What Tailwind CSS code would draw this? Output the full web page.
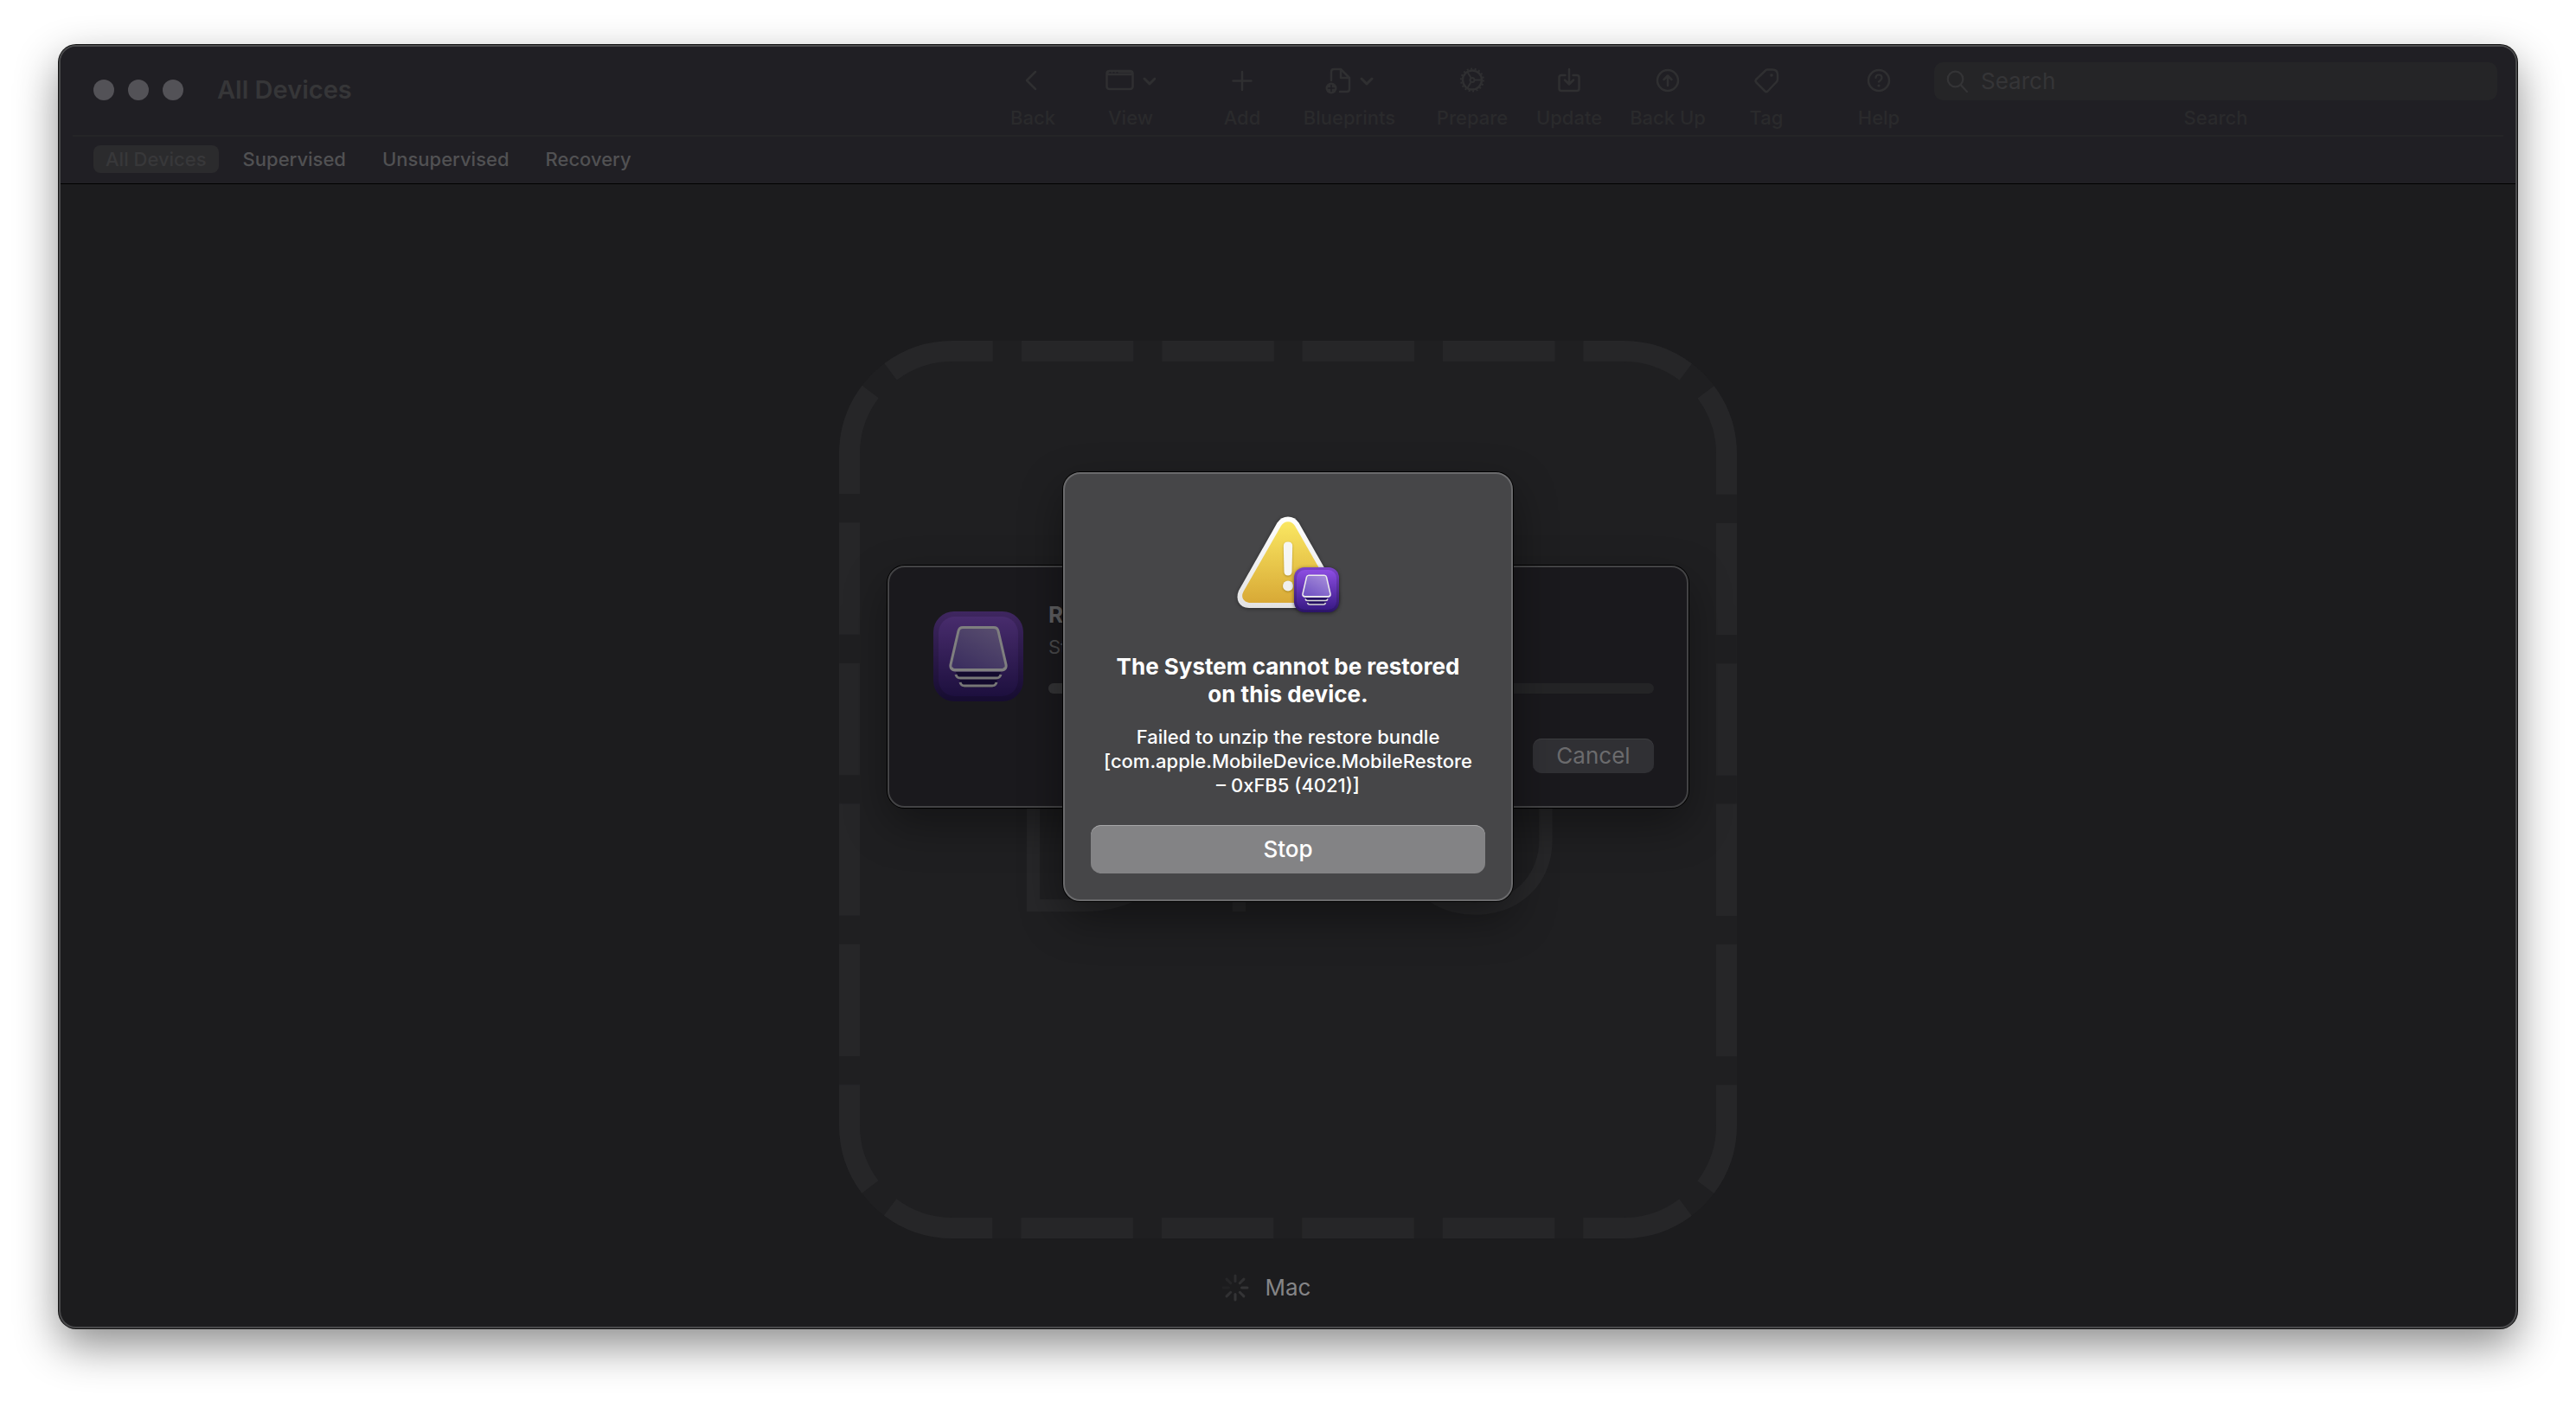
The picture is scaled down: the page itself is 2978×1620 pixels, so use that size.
<!DOCTYPE html>
<html lang="en">
<head>
<meta charset="utf-8">
<title>All Devices</title>
<script src="https://cdn.jsdelivr.net/npm/@tailwindcss/browser@4"></script>
</head>
<body class="flex min-h-screen bg-white px-[68px] pt-[52px] pb-[84px] font-[Inter,'Liberation_Sans',sans-serif] text-[22px] leading-7">

<svg class="absolute size-0" aria-hidden="true">
  <defs>
    <linearGradient id="tile" x1="0" y1="0" x2="0" y2="1"><stop offset="0" stop-color="#7c43c8"/><stop offset="1" stop-color="#2b1468"/></linearGradient>
    <linearGradient id="face" x1="0" y1="0" x2="0" y2="1"><stop offset="0" stop-color="#8d4de2"/><stop offset="1" stop-color="#391a86"/></linearGradient>
    <linearGradient id="glass" x1="1" y1="0" x2="0.3" y2="1"><stop offset="0" stop-color="#ab92dc"/><stop offset="1" stop-color="#7355c4"/></linearGradient>
    <linearGradient id="warn" x1="0" y1="0" x2="0" y2="1"><stop offset="0" stop-color="#fae762"/><stop offset="1" stop-color="#d8a936"/></linearGradient>
    <linearGradient id="rim" x1="0" y1="0" x2="0" y2="1"><stop offset="0" stop-color="#ffffff"/><stop offset="1" stop-color="#e2e2e2"/></linearGradient>
    <symbol id="configurator" viewBox="0 0 104 104">
      <rect width="104" height="104" rx="24" fill="url(#tile)"/>
      <rect x="6" y="6" width="92" height="92" rx="19" fill="url(#face)"/>
      <path d="M26 70h52l-8 18H34z" fill="#1c0b55" opacity=".8"/>
      <path d="M34 18.500h36q4 0 5 4l9 39q1 6-5 6H25q-6 0-5-6l9-39q1-4 5-4z" fill="url(#glass)" stroke="#ebebeb" stroke-width="3"/>
      <path d="M21 65q1 3 4 3h54q3 0 4-3" fill="none" stroke="#ebebeb" stroke-width="3"/>
      <path d="M26 73q1 4 5 4h42q4 0 5-4M31 82q1 4 5 4h32q4 0 5-4" fill="none" stroke="#dcdcdc" stroke-width="3"/>
    </symbol>
  </defs>
</svg>

<div class="flex flex-1 flex-col overflow-hidden rounded-[20px] border-2 border-[#4a4a4c] bg-[#1c1c1e] shadow-[0_0_0_1px_#111111,0_20px_50px_rgba(0,0,0,0.45)]">

  <header class="border-b border-black bg-[#201f24]">
    <div class="flex h-[102px] items-start pr-[21px] pl-[38px] text-[#2a2a2c]">
      <div class="mt-[38px] flex gap-4">
        <button type="button" aria-label="Close" class="size-6 rounded-full bg-[#535257]"></button>
        <button type="button" aria-label="Minimize" class="size-6 rounded-full bg-[#535257]"></button>
        <button type="button" aria-label="Zoom" class="size-6 rounded-full bg-[#535257]"></button>
      </div>
      <h1 class="mt-8 ml-[39px] text-[29px] leading-9 font-semibold text-[#363638]">All Devices</h1>

      <nav aria-label="Toolbar" class="mt-[18px] ml-auto flex font-medium">
        <button type="button" class="flex w-20 flex-col items-center gap-1.5">
          <svg class="h-11 w-8" viewBox="0 0 32 44" fill="none" stroke="#2f2f31" stroke-width="2.500" stroke-linecap="round" stroke-linejoin="round"><path d="M19 11 9 21l10 10"/></svg>
          Back
        </button>
        <button type="button" class="flex w-[146px] flex-col items-center gap-1.5">
          <svg class="h-11 w-[58px]" viewBox="0 0 58 44" fill="none" stroke="#2f2f31" stroke-width="2.500" stroke-linecap="round" stroke-linejoin="round"><rect x="1.500" y="10" width="30" height="21" rx="3"/><path d="M2 11h29v3H2z"/><path d="M5 12h1M9 12h1M13 12h1" stroke="#201f24" stroke-width="1.500"/><path d="m45 19 6 6 6-6" stroke-width="3"/></svg>
          View
        </button>
        <button type="button" class="flex w-28 flex-col items-center gap-1.5">
          <svg class="h-11 w-8" viewBox="0 0 32 44" fill="none" stroke="#2f2f31" stroke-width="2.500" stroke-linecap="round"><path d="M16 11v21M5.500 21.500h21"/></svg>
          Add
        </button>
        <button type="button" class="flex w-34 flex-col items-center gap-1.5">
          <svg class="h-11 w-14" viewBox="0 0 56 44" fill="none" stroke="#2f2f31" stroke-width="2.500" stroke-linecap="round" stroke-linejoin="round"><path d="M7 21V11q0-3 3-3h8l10 10v13q0 3-3 3h-8M18 8v10h10"/><circle cx="7" cy="30" r="6.500" fill="#2f2f31" stroke="none"/><path d="M7 26.500v7M3.500 30h7" stroke="#201f24" stroke-width="1.500"/><path d="m42 19 6 6 6-6" stroke-width="3"/></svg>
          Blueprints
        </button>
        <button type="button" class="flex w-[148px] flex-col items-center gap-1.5">
          <svg class="h-11 w-8" viewBox="0 0 32 44" fill="none" stroke="#2f2f31" stroke-width="2.500"><circle cx="16" cy="20.500" r="11"/><circle cx="16" cy="20.500" r="13" stroke-width="2" stroke-dasharray="2 2.540"/><circle cx="16" cy="20.500" r="2.500" stroke-width="2"/><path d="M19 20.500h8M14.500 18l-4.500-7.500M14.500 23 10 30.500" stroke-width="2"/></svg>
          Prepare
        </button>
        <button type="button" class="flex w-19 flex-col items-center gap-1.5">
          <svg class="h-11 w-8" viewBox="0 0 32 44" fill="none" stroke="#2f2f31" stroke-width="2.500" stroke-linecap="round" stroke-linejoin="round"><path d="M11.500 15H7q-2.500 0-2.500 2.500v13Q4.500 33 7 33h18q2.500 0 2.500-2.500v-13Q27.500 15 25 15h-4.500M16 8v17M11 20.500l5 5 5-5"/></svg>
          Update
        </button>
        <button type="button" class="flex w-38 flex-col items-center gap-1.5">
          <svg class="h-11 w-8" viewBox="0 0 32 44" fill="none" stroke="#2f2f31" stroke-width="2.500" stroke-linecap="round" stroke-linejoin="round"><circle cx="16" cy="21" r="12"/><path d="M16 27V15.500M11.500 20l4.500-4.500 4.500 4.500"/></svg>
          Back Up
        </button>
        <button type="button" class="flex w-19 flex-col items-center gap-1.5">
          <svg class="h-11 w-8" viewBox="0 0 32 44" fill="none" stroke="#2f2f31" stroke-width="2.500" stroke-linejoin="round"><path d="M17 8.500h6q6 0 6 6v5q0 2-1.500 3.500l-10 10.500q-1.500 1.500-3 0l-10-10q-2-2 0-4l10-9.500q1-1.500 2.500-1.500z"/><circle cx="22" cy="15" r="1.800" fill="#2f2f31" stroke="none"/></svg>
          Tag
        </button>
        <button type="button" class="ml-7 flex w-32 flex-col items-center gap-1.5">
          <svg class="h-11 w-8" viewBox="0 0 32 44" fill="none" stroke="#2f2f31" stroke-width="2.500" stroke-linecap="round" stroke-linejoin="round"><circle cx="16" cy="21" r="12"/><path d="M12.500 18q0-3.500 3.500-3.500t3.500 3.200Q19.500 20 16 22.500" stroke-width="2.200"/><circle cx="16" cy="27" r="1.600" fill="#2f2f31" stroke="none"/></svg>
          Help
        </button>
      </nav>

      <div class="mt-[18px] flex w-[651px] flex-col items-center gap-1.5">
        <div class="flex h-11 w-full items-center gap-3.5 rounded-[10px] bg-[#252527] pl-3.5">
          <svg class="h-7 w-[26px] shrink-0" viewBox="0 0 26 28" fill="none" stroke="#343436" stroke-width="2.200" stroke-linecap="round"><circle cx="10.500" cy="11.500" r="8.800"/><path d="m17 18.500 7 7.500"/></svg>
          <input id="search" type="text" placeholder="Search" class="w-full bg-transparent text-[26px] leading-8 outline-none placeholder:text-[#353537]">
        </div>
        <label for="search" class="font-medium">Search</label>
      </div>
    </div>
    <div class="mx-3.5 h-0.5 bg-[#252527]"></div>
    <nav aria-label="Filter" class="flex h-[54px] items-start gap-3.5 pt-2.5 pl-[38px] font-medium text-[#515153]">
      <button type="button" aria-pressed="true" class="h-8 rounded-lg bg-[#2b2b2d] px-3.5 text-[#38383a]">All Devices</button>
      <button type="button" class="h-8 px-3.5">Supervised</button>
      <button type="button" class="h-8 px-3.5">Unsupervised</button>
      <button type="button" class="h-8 px-3.5">Recovery</button>
    </nav>
  </header>

  <main class="relative flex flex-1 flex-col items-center pt-[181px] pb-[29px]">
    <div class="relative flex size-[1038px] items-center justify-center pt-10">
      <svg class="absolute inset-0 size-full" viewBox="0 0 1038 1038" fill="none">
        <rect width="1038" height="1038" rx="131" fill="#1f1f21"/>
        <path d="M519 12H907a119 119 0 0 1 119 119V907a119 119 0 0 1-119 119H131A119 119 0 0 1 12 907V131A119 119 0 0 1 131 12z" stroke="#262628" stroke-width="24" stroke-dasharray="0 16.500 129.500 33 129.500 33 123.500 33 123.500 33 129.500 33 129.500 16.430"/>
      </svg>
      <span class="relative text-[332px] leading-none font-extralight text-[#272729]">DFU</span>
    </div>
    <div class="mt-[41px] grid grid-cols-[1fr_auto_1fr] items-center gap-[19px] self-stretch">
      <svg class="size-8 justify-self-end" viewBox="-16 -16 32 32" stroke="#343436" stroke-width="3" stroke-linecap="round">
        <path d="M0-7.500V-14" opacity=".7"/><path d="M5.300-5.300 9.900-9.900" opacity=".85"/><path d="M7.500 0H14"/><path d="M5.300 5.300 9.900 9.900"/><path d="M0 7.500V14"/><path d="M-5.300 5.300-9.900 9.900" opacity=".9"/><path d="M-7.500 0H-14" opacity=".25"/><path d="M-5.300-5.300-9.900-9.900" opacity=".45"/>
      </svg>
      <span class="text-[26px] leading-8 text-[#858587]">Mac</span>
    </div>

    <div class="absolute inset-x-0 top-[441px] flex justify-center">
      <section role="dialog" aria-label="Restore progress" class="flex w-[926px] items-start gap-[29px] rounded-[20px] border-2 border-[#434345] bg-[#1a191d] pt-[39px] pr-[38px] pb-[38px] pl-[51px] shadow-[0_0_0_1px_#000000,0_20px_50px_rgba(0,0,0,0.35)]">
        <svg class="mt-3 size-[104px] shrink-0 brightness-[.54] saturate-[.8]"><use href="#configurator"/></svg>
        <div class="flex flex-1 flex-col">
          <h2 class="text-[26px] leading-8 font-bold text-[#5f5f61]">Restoring</h2>
          <p class="mt-[7px] text-[#4a4a4c]">Step 1 of 2</p>
          <div role="progressbar" aria-label="Restore" class="mt-7 h-3 overflow-hidden rounded-full bg-[#242426]"><div class="h-full w-1/6 bg-[#343436]"></div></div>
          <button type="button" class="mt-[52px] h-10 w-[140px] self-end rounded-[10px] bg-[#303034] text-[26px] leading-8 text-[#6b6b6d] shadow-[inset_0_1px_0_#3d3d40]">Cancel</button>
        </div>
      </section>
    </div>

    <div class="absolute inset-x-0 top-[333px] flex justify-center">
      <section role="alertdialog" aria-labelledby="alert-title" aria-describedby="alert-text" class="flex w-[520px] flex-col items-center rounded-[20px] border-2 border-[#6a6a6c] bg-[#464648] px-[30px] pt-[49px] pb-[30px] text-center text-white shadow-[0_0_0_1px_#000000,0_20px_50px_rgba(0,0,0,0.4)]">
        <svg class="h-28 w-[118px] overflow-visible" viewBox="0 0 118 112">
          <path d="M46.500 7.500Q51 .500 59 .500t12.500 7L116 86q3.500 8 0 13.500t-12 6.500H14Q5 105.500 2 99.500T2 86z" fill="url(#rim)" class="drop-shadow-[0_1px_2px_rgba(0,0,0,0.4)]"/>
          <path d="M51 11q3-4.800 8-4.800t8 4.800l43.500 76q2.500 5 .500 8.500t-7 4.500H14q-5-1-7-4.500t.500-8.500z" fill="url(#warn)"/>
          <path d="M53.800 34.500q0-5 5.200-5t5.200 5l-.7 30q-.5 4-4.500 4t-4.500-4z" fill="#f6f6f4" class="drop-shadow-[0_1px_1px_rgba(120,90,0,0.5)]"/>
          <circle cx="59" cy="80.500" r="6" fill="#f0f0ee" class="drop-shadow-[0_1px_1px_rgba(120,90,0,0.5)]"/>
          <use href="#configurator" x="66" y="59" width="52" height="52" class="drop-shadow-[0_1px_2px_rgba(0,0,0,0.5)]"/>
        </svg>
        <h2 id="alert-title" class="mt-[46px] w-[420px] text-[26px] leading-8 font-bold">The System cannot be restored on this device.</h2>
        <p id="alert-text" class="mt-[19px] w-[436px] font-medium">Failed to unzip the restore bundle [com.apple.MobileDevice.MobileRestore – 0xFB5 (4021)]</p>
        <button type="button" class="mt-8 h-14 w-full rounded-xl bg-[#838385] text-[26px] leading-8 font-medium shadow-[inset_0_1px_0_#a5a5a7]">Stop</button>
      </section>
    </div>
  </main>
</div>
</body>
</html>
